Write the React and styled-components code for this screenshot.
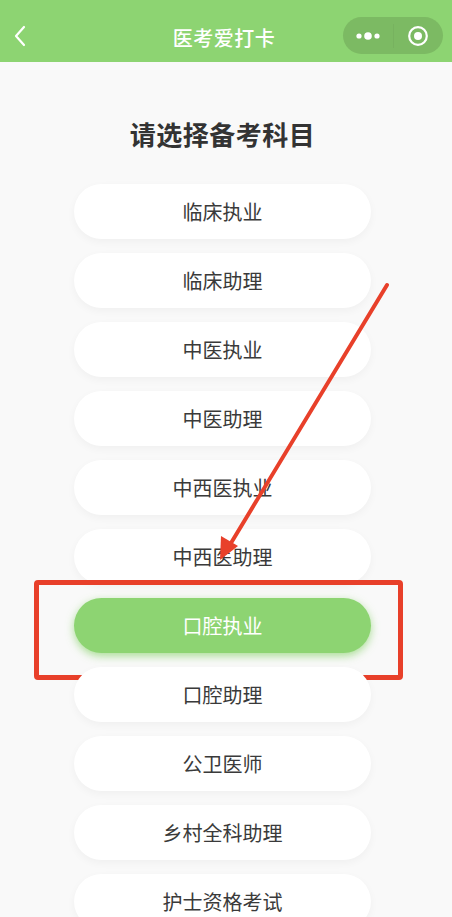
import styled, { createGlobalStyle } from "styled-components";

const subjects = [
    "临床执业",
    "临床助理",
    "中医执业",
    "中医助理",
    "中西医执业",
    "中西医助理",
    "口腔执业",
    "口腔助理",
    "公卫医师",
    "乡村全科助理",
    "护士资格考试",
];

const GlobalStyle = createGlobalStyle`
    html, body {
        margin: 0;
        padding: 0;
        background: #f9f9f9;
        font-family: "Noto Sans CJK SC", "Noto Sans", sans-serif;
    }
`;

const App = () => {
    const selected = "口腔执业";

    return (
        <Page>
            <GlobalStyle/>
            <NavBar>
                <BackButton>
                    <svg width="14" height="22" viewBox="0 0 14 22">
                        <path d="M11 2 L3 11 L11 20" fill="none" stroke="#fff" strokeWidth="2.2"
                              strokeLinecap="round" strokeLinejoin="round"/>
                    </svg>
                </BackButton>
                <NavTitle>医考爱打卡</NavTitle>
                <Capsule>
                    <CapsuleHalf>
                        <svg width="26" height="10" viewBox="0 0 26 10">
                            <circle cx="4" cy="5" r="2.6" fill="#fff"/>
                            <circle cx="13" cy="5" r="3.8" fill="#fff"/>
                            <circle cx="22" cy="5" r="2.6" fill="#fff"/>
                        </svg>
                    </CapsuleHalf>
                    <Divider/>
                    <CapsuleHalf>
                        <svg width="22" height="22" viewBox="0 0 22 22">
                            <circle cx="11" cy="11" r="8.8" fill="none" stroke="#fff" strokeWidth="2.2"/>
                            <circle cx="11" cy="11" r="4" fill="#fff"/>
                        </svg>
                    </CapsuleHalf>
                </Capsule>
            </NavBar>

            <Content>
                <Heading>请选择备考科目</Heading>
                <List>
                    {subjects.map((name) => (
                        <SubjectButton key={name} $active={name === selected}>
                            {name}
                            {name === selected && <Highlight/>}
                        </SubjectButton>
                    ))}
                </List>
            </Content>

            <Arrow width="452" height="917" viewBox="0 0 452 917">
                <line x1="387" y1="285" x2="228" y2="548" stroke="#e8402a" strokeWidth="4"
                      strokeLinecap="round"/>
                <polygon points="220,560 221,536 238,546" fill="#e8402a"/>
            </Arrow>
        </Page>
    );
};

export default App;

const Page = styled.div`
    position: relative;
    width: 452px;
    min-height: 917px;
    overflow: hidden;
    background: #f9f9f9;
`;

const NavBar = styled.div`
    height: 62px;
    background: #8dd472;
    display: flex;
    align-items: center;
    justify-content: center;
    position: relative;
    padding-right: 4px;
`;

const BackButton = styled.div`
    position: absolute;
    left: 13px;
    top: 25px;
    display: flex;
`;

const NavTitle = styled.div`
    color: #fff;
    font-size: 20px;
    font-weight: 500;
    padding-top: 12px;
    letter-spacing: 0.5px;
`;

const Capsule = styled.div`
    position: absolute;
    right: 9px;
    top: 17px;
    width: 100px;
    height: 37px;
    border-radius: 19px;
    background: #7cba63;
    display: flex;
    align-items: center;
`;

const CapsuleHalf = styled.div`
    flex: 1;
    display: flex;
    justify-content: center;
    align-items: center;
`;

const Divider = styled.div`
    width: 1px;
    height: 24px;
    background: rgba(0, 0, 0, 0.04);
`;

const Content = styled.div`
    display: flex;
    flex-direction: column;
    align-items: center;
    padding-right: 7px;
`;

const Heading = styled.h1`
    margin: 0;
    padding-top: 52px;
    height: 70px;
    line-height: 40px;
    font-size: 26px;
    font-weight: 700;
    color: #333;
    letter-spacing: 0.5px;
`;

const List = styled.div`
    display: flex;
    flex-direction: column;
    gap: 14px;
`;

const SubjectButton = styled.div`
    position: relative;
    width: 297px;
    height: 55px;
    border-radius: 28px;
    display: flex;
    align-items: center;
    justify-content: center;
    font-size: 20px;
    font-weight: 400;
    color: ${props => props.$active ? "#fff" : "#3a3a3a"};
    background: ${props => props.$active ? "#8dd472" : "#fff"};
    box-shadow: ${props => props.$active
            ? "0 3px 8px rgba(141, 212, 114, 0.75)"
            : "0 3px 8px rgba(0, 0, 0, 0.04)"};
`;

const Highlight = styled.div`
    position: absolute;
    left: -40px;
    top: -18px;
    width: 359px;
    height: 90px;
    border: 5px solid #e8402a;
    border-radius: 4px;
    pointer-events: none;
`;

const Arrow = styled.svg`
    position: absolute;
    left: 0;
    top: 0;
    pointer-events: none;
`;
